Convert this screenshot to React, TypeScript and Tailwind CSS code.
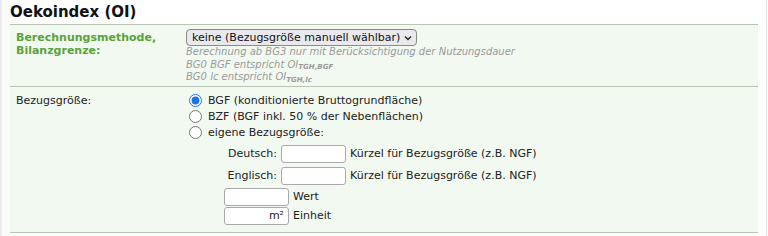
import React, { useState } from 'react';

const font = "font-['DejaVu_Sans',Verdana,sans-serif]";

function TextBox({ value, align = 'left' }: { value?: string; align?: 'left' | 'right' }) {
  return (
    <input
      type="text"
      defaultValue={value}
      className={`h-[18px] w-[65px] rounded-[3px] border border-[#a9a9a9] bg-white px-1 text-[11px] text-[#222] outline-none ${
        align === 'right' ? 'text-right' : 'text-left'
      }`}
    />
  );
}

export default function App() {
  const [ref, setRef] = useState('bgf');

  return (
    <div className={`${font} h-[236px] w-[768px] overflow-hidden bg-white text-[11px] text-[#222]`}>
      <div className="flex h-full">
        <div className="w-[10px] border-l-2 border-[#ececec] bg-[#fbfbfb]" />
        <div className="w-[748px]">
          <h2 className="h-[24px] pt-[2px] text-[15px] leading-[20px] font-bold text-[#111]">Oekoindex (OI)</h2>

          {/* Berechnungsmethode */}
          <div className="grid grid-cols-[176px_1fr] border-y border-[#b8c5b3] bg-[#f2f9f1] pt-[4px] pb-[2px]">
            <div className="pt-[2px] pl-[6px] text-[11px] leading-[13px] font-bold text-[#5aa23a]">
              Berechnungsmethode,
              <br />
              Bilanzgrenze:
            </div>
            <div>
              <div className="flex h-[17px] w-[231px] items-center justify-between rounded-[4px] border border-[#8a8a8a] bg-[#e9e9ed] pr-[4px] pl-[5px] text-[11px] leading-none whitespace-nowrap text-[#111]">
                <span>keine (Bezugsgröße manuell wählbar)</span>
                <svg className="shrink-0" width="8" height="6" viewBox="0 0 8 6" fill="none" stroke="#222" strokeWidth="1.4">
                  <path d="M1 1.5l3 3 3-3" />
                </svg>
              </div>
              <div className="text-[10px] leading-[12.5px] text-[#999] italic">
                <div className="h-[12.5px]">Berechnung ab BG3 nur mit Berücksichtigung der Nutzungsdauer</div>
                <div className="h-[12.5px]">
                  BG0 BGF entspricht OI
                  <sub className="text-[7px] leading-none font-bold">TGH,BGF</sub>
                </div>
                <div className="h-[12.5px]">
                  BG0 lc entspricht OI
                  <sub className="text-[7px] leading-none font-bold">TGH,lc</sub>
                </div>
              </div>
            </div>
          </div>

          {/* Bezugsgröße */}
          <div className="grid grid-cols-[176px_1fr] border-b border-[#b8c5b3] bg-[#f2f9f1] pt-[6px] pb-[7px]">
            <div className="pl-[6px] leading-[16px]">Bezugsgröße:</div>
            <div className="leading-[16px]">
              {[
                ['bgf', 'BGF (konditionierte Bruttogrundfläche)'],
                ['bzf', 'BZF (BGF inkl. 50 % der Nebenflächen)'],
                ['own', 'eigene Bezugsgröße:'],
              ].map(([k, label]) => (
                <label key={k} className="flex h-[16px] items-center">
                  <input
                    type="radio"
                    name="ref"
                    checked={ref === k}
                    onChange={() => setRef(k)}
                    className="mr-[6px] ml-[3px] h-[13px] w-[13px] accent-[#1a73e8]"
                  />
                  <span>{label}</span>
                </label>
              ))}
              <div className="mt-[4px] ml-[38px] grid grid-cols-[53px_auto_1fr] items-center gap-x-[4px] gap-y-[4px]">
                <span className="text-right">Deutsch:</span>
                <TextBox />
                <span>Kürzel für Bezugsgröße (z.B. NGF)</span>
                <span className="text-right">Englisch:</span>
                <TextBox />
                <span>Kürzel für Bezugsgröße (z.B. NGF)</span>
              </div>
              <div className="mt-[3px] ml-[38px] grid grid-cols-[auto_1fr] items-center gap-x-[4px] gap-y-[1px]">
                <TextBox />
                <span>Wert</span>
                <TextBox value="m²" align="right" />
                <span>Einheit</span>
              </div>
            </div>
          </div>
        </div>
        <div className="w-[8px] bg-white" />
        <div className="flex-1 border-l border-[#e2e2e2] bg-[#fafaf7]" />
      </div>
    </div>
  );
}
